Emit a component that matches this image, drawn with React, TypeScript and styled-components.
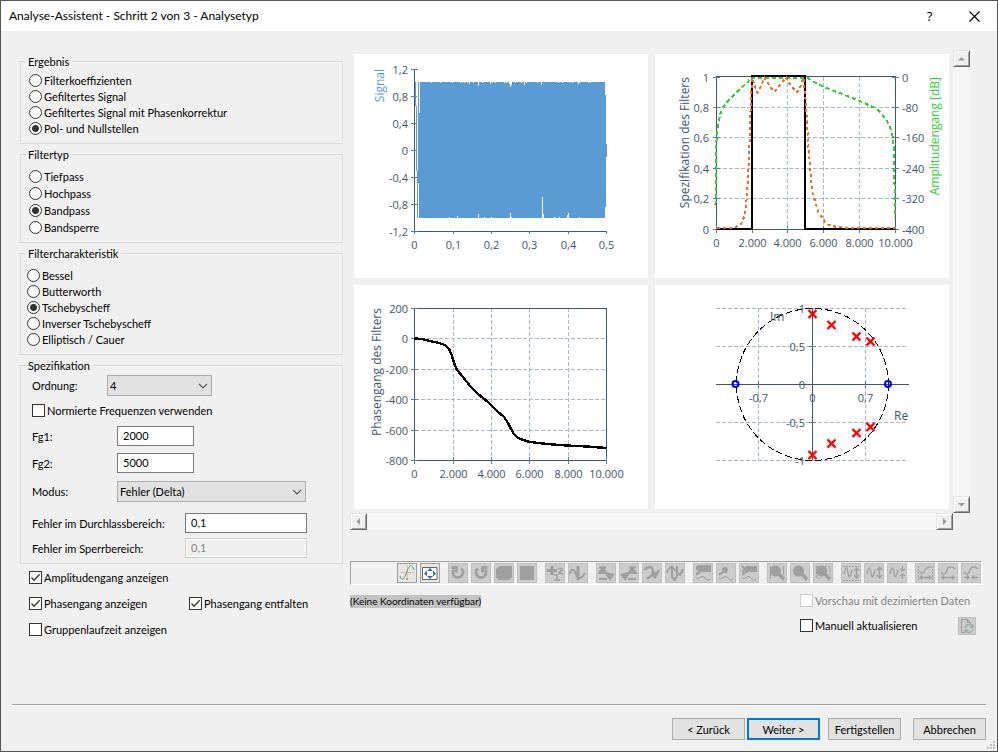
import React from "react";
import styled, { createGlobalStyle, css } from "styled-components";

const GlobalStyle = createGlobalStyle`
  *, *::before, *::after { box-sizing: border-box; }
  body {
    margin: 0;
    background: #f0f0f0;
    color: #000;
    font: 11px/13px Lato, "Liberation Sans", sans-serif;
  }
  button, input, select { font: inherit; color: inherit; margin: 0; }
`;

/* ---------- window frame ---------- */

const Window = styled.div`
  position: relative;
  display: flex;
  flex-direction: column;
  min-height: 100vh;
  border: 1px solid #555;
  background: #f0f0f0;
`;

const TitleBar = styled.header`
  display: flex;
  align-items: center;
  height: 30px;
  padding-left: 8px;
  background: #fff;
`;

const Title = styled.h1`
  flex: 1;
  margin: 0;
  font: 12px/16px Lato, "Noto Sans", sans-serif;
`;

const CaptionButton = styled.button`
  display: grid;
  place-items: center;
  width: 45px;
  height: 28px;
  padding: 0;
  border: 0;
  background: none;
  font: 500 13px/16px "Open Sans", "Noto Sans", sans-serif;
`;

const Body = styled.main`
  display: grid;
  grid-template-columns: 323px 1fr;
  gap: 7px;
  padding: 0 15px 0 19px;
`;

/* ---------- settings ---------- */

const Settings = styled.form`
  display: flex;
  flex-direction: column;
  gap: 4px;
  padding-top: 24px;
`;

const Group = styled.fieldset`
  min-width: 0;
  margin: 0;
  padding: 0;
  border: 1px solid #dcdcdc;
`;

const Legend = styled.legend`
  margin-left: 6px;
  padding: 0 3px 0 1px;
`;

const Options = styled.div<{ $top: number; $gap: number; $left: number }>`
  display: flex;
  flex-direction: column;
  align-items: flex-start;
  gap: ${(p) => p.$gap}px;
  padding: ${(p) => p.$top}px 8px 8px ${(p) => p.$left}px;
`;

const Choice = styled.label<{ $disabled?: boolean }>`
  display: flex;
  align-items: center;
  gap: 2px;
  height: 13px;
  white-space: nowrap;
  color: ${(p) => (p.$disabled ? "#838383" : "#000")};
`;

const Radio = styled.input.attrs({ type: "radio" })`
  appearance: none;
  flex: none;
  width: 13px;
  height: 13px;
  border: 1px solid #333;
  border-radius: 50%;
  background: #fff;
  &:checked {
    background: radial-gradient(circle, #333 0 3px, #fff 4px);
  }
`;

const CheckInput = styled.input.attrs({ type: "checkbox" })`
  appearance: none;
  grid-area: 1 / 1;
  width: 13px;
  height: 13px;
  border: 1px solid #333;
  background: #fff;
  &:disabled { border-color: #ccc; }
  & + svg { visibility: hidden; }
  &:checked + svg { visibility: visible; }
`;

const CheckBox = styled.span`
  display: grid;
  flex: none;
  svg { grid-area: 1 / 1; pointer-events: none; }
`;

const Fields = styled.div`
  display: flex;
  flex-direction: column;
  padding: 3px 11px 5px;
`;

const Field = styled.div<{ $label: number; $gap?: number }>`
  display: grid;
  grid-template-columns: ${(p) => p.$label}px auto;
  justify-content: start;
  align-items: center;
  margin-bottom: ${(p) => p.$gap ?? 0}px;
`;

const Spaced = styled.div`
  display: flex;
  margin-bottom: 9px;
`;

const TextBox = styled.input.attrs({ type: "text" })<{ $width: number }>`
  width: ${(p) => p.$width}px;
  height: 20px;
  padding: 0 5px 1px;
  border: 1px solid #7a7a7a;
  background: #fff;
  &:disabled {
    border-color: #ccc;
    background: #f0f0f0;
    box-shadow: inset 0 0 0 1px #fff;
    color: #838383;
  }
`;

const SelectFrame = styled.span<{ $width: number }>`
  position: relative;
  width: ${(p) => p.$width}px;
  svg {
    position: absolute;
    right: 4px;
    top: 8px;
    pointer-events: none;
  }
`;

const Select = styled.select`
  appearance: none;
  display: block;
  width: 100%;
  height: 21px;
  padding: 0 2px;
  border: 1px solid #adadad;
  border-radius: 0;
  background: #e1e1e1;
`;

const Toggles = styled.div`
  display: grid;
  grid-template-columns: 160px auto;
  justify-content: start;
  row-gap: 13px;
  padding: 3px 9px 0;
`;

/* ---------- preview ---------- */

const Preview = styled.section`
  min-width: 0;
  padding-top: 19px;
`;

const Scroller = styled.div`
  display: grid;
  grid-template-columns: 1fr 17px;
  grid-template-rows: auto 17px;
  margin-right: 12px;
`;

const Charts = styled.div`
  display: grid;
  grid-template-columns: 1fr 1fr;
  gap: 7px;
  padding: 4px;
`;

const ChartSvg = styled.svg`
  display: block;
  width: 100%;
  background: #fff;
  fill: #44546a;
  font: 11px "Open Sans", "Noto Sans", sans-serif;
`;

const AxisTitle = styled.text`
  font-size: 12px;
`;

const ScrollTrack = styled.div<{ $vertical?: boolean }>`
  display: flex;
  flex-direction: ${(p) => (p.$vertical ? "column" : "row")};
  justify-content: space-between;
  background: repeating-conic-gradient(#fff 0 25%, #f0f0f0 0 50%) 0 0 / 2px 2px;
`;

const ScrollButton = styled.button`
  display: grid;
  place-items: center;
  width: 17px;
  height: 17px;
  padding: 0;
  border: 1px solid;
  border-color: #e3e3e3 #696969 #696969 #e3e3e3;
  background: #f0f0f0;
  box-shadow: inset 1px 1px #fff, inset -1px -1px #a0a0a0;
`;

const ToolBar = styled.div`
  display: flex;
  gap: 8px;
  height: 24px;
  margin-top: 31px;
  padding: 1px 0 0 46px;
  border: 1px solid;
  border-color: #a0a0a0 #fff #fff #a0a0a0;
`;

const ToolGroup = styled.div`
  display: flex;
  gap: 3px;
`;

const toolColors = css`
  border: 1px solid #bfbfbf;
  background: #ccc;
`;

const Tool = styled.button<{ $active?: boolean }>`
  display: block;
  width: 20px;
  height: 20px;
  padding: 0;
  ${(p) => (p.$active ? "border: 1px solid #a0a0a0; background: #e6e6e6;" : toolColors)}
  svg { display: block; }
`;

const Status = styled.div`
  display: grid;
  grid-template-columns: 1fr 182px;
  padding-top: 9px;
`;

const Coordinates = styled.output`
  justify-self: start;
  align-self: start;
  margin-top: 1px;
  background: #c3c3c3;
  font: 10px/13px Lato, "Noto Sans", sans-serif;
`;

const UpdateOptions = styled.div`
  display: grid;
  gap: 10px;
`;

const UpdateRow = styled.div`
  display: flex;
  align-items: flex-start;
  justify-content: space-between;
  padding-right: 6px;
`;

const Manual = styled.div`
  padding-top: 2px;
`;

const RefreshButton = styled.button`
  width: 18px;
  height: 18px;
  padding: 0;
  ${toolColors}
  svg { display: block; }
`;

/* ---------- footer ---------- */

const Footer = styled.footer`
  display: flex;
  justify-content: flex-end;
  margin: auto 11px 0;
  padding: 13px 0 11px;
  border-top: 1px solid #a0a0a0;
  box-shadow: inset 0 1px #fff;
`;

const ActionButton = styled.button<{ $primary?: boolean; $gap?: number }>`
  width: 73px;
  height: 22px;
  margin-left: ${(p) => p.$gap ?? 0}px;
  padding: 0;
  border: ${(p) => (p.$primary ? "2px solid #0078d7" : "1px solid #adadad")};
  background: #e1e1e1;
`;

const Grip = styled.svg`
  position: absolute;
  right: 2px;
  bottom: 2px;
`;

/* ---------- small controls ---------- */

function Check({ label, ...rest }: { label: string; defaultChecked?: boolean; disabled?: boolean }) {
  return (
    <Choice $disabled={rest.disabled}>
      <CheckBox>
        <CheckInput {...rest} />
        <svg width="13" height="13" viewBox="0 0 13 13" fill="none" stroke="#333" strokeWidth="1.3">
          <path d="M2.5 6.5 5 9.2 10.7 3.3" />
        </svg>
      </CheckBox>
      {label}
    </Choice>
  );
}

function RadioGroup(p: {
  name: string; title: string; items: string[]; selected: number; top: number; gap: number; left: number;
}) {
  return (
    <Group>
      <Legend>{p.title}</Legend>
      <Options $top={p.top} $gap={p.gap} $left={p.left}>
        {p.items.map((item, i) => (
          <Choice key={item}>
            <Radio name={p.name} defaultChecked={i === p.selected} />
            {item}
          </Choice>
        ))}
      </Options>
    </Group>
  );
}

function DropDown({ id, width, options }: { id: string; width: number; options: string[] }) {
  return (
    <SelectFrame $width={width}>
      <Select id={id}>
        {options.map((o) => <option key={o}>{o}</option>)}
      </Select>
      <svg width="10" height="6" viewBox="0 0 10 6" fill="none" stroke="#555" strokeWidth="1.2">
        <path d="M1 .8 5 4.8 9 .8" />
      </svg>
    </SelectFrame>
  );
}

function Arrow({ d }: { d: string }) {
  return <svg width="9" height="9" viewBox="0 0 9 9" fill="#9a9a9a"><path d={d} /></svg>;
}

/* ---------- charts ---------- */

type Tick = [number, string];
const AXIS = "#44546a";
const TICK = "#5a7ca5";
const GRID = "#adb5c8";

const yLabels = (ticks: Tick[], x: number, anchor: "start" | "end" = "end") =>
  ticks.map(([y, t]) => <text key={t} x={x} y={y + 4} textAnchor={anchor}>{t}</text>);
const xLabels = (ticks: Tick[], y: number) =>
  ticks.map(([x, t]) => <text key={t} x={x} y={y} textAnchor="middle">{t}</text>);
const hLines = (ys: number[], x1: number, x2: number) => ys.map((y) => `M${x1} ${y}H${x2}`).join("");
const vLines = (xs: number[], y1: number, y2: number) => xs.map((x) => `M${x} ${y1}V${y2}`).join("");
const poly = (pts: number[][]) => "M" + pts.map((p) => p.join(" ")).join("L");

const freqTicks: Tick[] = [[60.5, "0"], [99.5, "2.000"], [137.5, "4.000"], [175.5, "6.000"], [214.5, "8.000"], [252.5, "10.000"]];

function SignalChart() {
  const ys: Tick[] = [[15.5, "1,2"], [42.5, "0,8"], [69.5, "0,4"], [96.5, "0"], [123.5, "-0,4"], [150.5, "-0,8"], [177.5, "-1,2"]];
  const xs: Tick[] = [[60.5, "0"], [99.5, "0,1"], [137.5, "0,2"], [175.5, "0,3"], [214.5, "0,4"], [252.5, "0,5"]];
  const topGaps = [[77, 1], [86, 1], [98, 1], [106, 1], [108, 1], [110, 1], [113, 1], [115, 2], [119, 1], [124, 4], [128, 1], [136, 2], [138, 1], [141, 1], [150, 1], [152, 1], [155, 2], [156, 5], [157, 3], [161, 1], [167, 1], [170, 3], [172, 1], [183, 1], [187, 3], [204, 1], [208, 1], [215, 1], [218, 1], [224, 2], [225, 1], [234, 1], [236, 1]];
  const bottomGaps = [[95, 1], [103, 2], [124, 4], [130, 1], [137, 1], [156, 5], [157, 1], [188, 21], [189, 4], [200, 1], [205, 1], [213, 3], [214, 5], [225, 1]];
  return (
    <ChartSvg viewBox="0 0 294 224" role="img" aria-label="Signal">
      <g shapeRendering="crispEdges">
        <path d="M60.5 15.5V177.5H252.5" fill="none" stroke={AXIS} />
        <path d={hLines(ys.map((t) => t[0]), 57, 64) + vLines(xs.map((t) => t[0]), 177, 180)} stroke={TICK} />
        <path fill="#5b9bd5" d="M61 28h1v24h1v65h1v-89h187v13h1v49h1v13h-1v50h-1v11H63v-47h-1v-65h-1z" />
        <path fill="#fff" d="M63 28h1v89h-1zM64 129h1v35h-1zM65 28h1v31h-1z" />
        <path fill="#fff" d={topGaps.map(([x, h]) => `M${x} 28h1v${h}h-1z`).join("")} />
        <path fill="#fff" d={bottomGaps.map(([x, h]) => `M${x} 164h1v${-h}h-1z`).join("")} />
      </g>
      {yLabels(ys, 54)}
      {xLabels(xs, 195)}
      <AxisTitle transform="translate(30 15) rotate(-90)" textAnchor="end" fill="#5b9bd5">Signal</AxisTitle>
    </ChartSvg>
  );
}

const amplitude = [[60.5, 151], [61, 91], [62.7, 74], [65, 61], [68, 53], [75, 45], [85, 35], [92, 29], [96, 23.5], [152, 23.5], [158, 27.5], [168, 32.5], [187, 40], [205, 47], [222, 55], [231, 65], [237, 78], [239, 94], [240, 164]];
const response = [[62, 174.5], [80, 173.3], [86, 170], [90, 161], [92, 141], [94, 104], [95.7, 51], [97.3, 24], [99, 30], [102.3, 38.7], [105, 34], [109.3, 23.5], [114, 31], [119.3, 37.7], [125, 31], [131, 23.5], [136, 32], [142, 38.3], [146, 31], [148.3, 23.5], [150.3, 41], [153.3, 91], [157.3, 138], [163.3, 158], [171.7, 170], [182, 173.3], [205, 174.3], [240.5, 174.5]];

function FilterChart() {
  const ys: Tick[] = [[23.5, "1"], [53.5, "0,8"], [83.5, "0,6"], [114.5, "0,4"], [144.5, "0,2"], [175.5, "0"]];
  const y2: Tick[] = [[23.5, "0"], [53.5, "-80"], [83.5, "-160"], [114.5, "-240"], [144.5, "-320"], [175.5, "-400"]];
  const xs: Tick[] = [[61.5, "0"], [97.5, "2.000"], [132.5, "4.000"], [168.5, "6.000"], [204.5, "8.000"], [240.5, "10.000"]];
  const yv = ys.map((t) => t[0]);
  const xv = xs.map((t) => t[0]);
  return (
    <ChartSvg viewBox="0 0 294 224" role="img" aria-label="Spezifikation des Filters">
      <g fill="none" shapeRendering="crispEdges">
        <path d={hLines(yv.slice(1, 5), 62, 240) + vLines(xv.slice(1, 5), 23, 175)} stroke={GRID} strokeDasharray="4 2" />
        <path d="M61.5 22.5H240.5V175.5H61.5Z" stroke={AXIS} />
        <path d={hLines(yv, 58, 65) + hLines(yv, 237, 244) + vLines(xv, 172, 179)} stroke={TICK} />
        <path d="M62 175H97V22H150V175H240" stroke="#000" strokeWidth="2" />
        <path d={poly(amplitude)} stroke="#32cd32" strokeWidth="2" strokeDasharray="4 3" />
        <path d={poly(response)} stroke="#ff6820" strokeWidth="2" strokeDasharray="3 3" />
      </g>
      {yLabels(ys, 54)}
      {yLabels(y2, 247, "start")}
      {xLabels(xs, 193)}
      <AxisTitle transform="translate(34 23) rotate(-90)" textAnchor="end">Spezifikation des Filters</AxisTitle>
      <AxisTitle transform="translate(284 23) rotate(-90)" textAnchor="end" fill="#32cd32">Amplitudengang [dB]</AxisTitle>
    </ChartSvg>
  );
}

const phase = [[60.5, 53.5], [68, 54], [76, 56], [84, 57.7], [91, 60], [95, 64], [97.7, 70], [100, 78], [103, 85], [109, 92], [116, 101], [124, 109], [134, 117], [143, 126], [150, 132], [154, 138], [157, 144], [160, 149], [164, 153], [169, 155], [176, 157], [193, 159], [213, 160.5], [233, 161.5], [252.5, 163]];

function PhaseChart() {
  const ys: Tick[] = [[23.5, "200"], [53.5, "0"], [84.5, "-200"], [114.5, "-400"], [145.5, "-600"], [175.5, "-800"]];
  const yv = ys.map((t) => t[0]);
  const xv = freqTicks.map((t) => t[0]);
  return (
    <ChartSvg viewBox="0 0 294 224" role="img" aria-label="Phasengang des Filters">
      <g fill="none" shapeRendering="crispEdges">
        <path d={hLines(yv.slice(1, 5), 61, 252) + vLines(xv.slice(1, 5), 23, 175)} stroke={GRID} strokeDasharray="4 2" />
        <path d="M60.5 23.5H252.5V175.5H60.5Z" stroke={AXIS} />
        <path d={hLines(yv, 57, 64) + vLines(xv, 172, 179)} stroke={TICK} />
        <path d={poly(phase)} stroke="#000" strokeWidth="2.4" />
      </g>
      {yLabels(ys, 54)}
      {xLabels(freqTicks, 193)}
      <AxisTitle transform="translate(27 23) rotate(-90)" textAnchor="end">Phasengang des Filters</AxisTitle>
    </ChartSvg>
  );
}

const poles = [[157.5, 29], [176.5, 40], [201.5, 51.5], [215.5, 56.5], [157.5, 170], [176.5, 158.5], [201.5, 148], [215.5, 142]];
const zeros = [[80.5, 99], [233, 99]];

function PoleZeroChart() {
  const ys: Tick[] = [[23.5, "1"], [61.5, "0,5"], [99.5, "0"], [137.5, "-0,5"], [175.5, "-1"]];
  return (
    <ChartSvg viewBox="0 0 294 224" role="img" aria-label="Pol- und Nullstellen">
      <g fill="none" shapeRendering="crispEdges">
        <path d={hLines([23.5, 61.5, 137.5, 175.5], 61, 251) + vLines([103.5, 210.5], 23, 175)} stroke={GRID} strokeDasharray="4 2" />
        <path d="M61 99.5H254M157.5 23V175" stroke={AXIS} />
        <path d={hLines([61.5, 137.5], 154, 161) + vLines([103.5, 210.5], 96, 103)} stroke={TICK} />
        <circle cx="157.5" cy="99.5" r="76" stroke="#000" strokeDasharray="7 3" />
      </g>
      {yLabels(ys, 150)}
      {xLabels([[103.5, "-0,7"], [157.5, "0"], [210.5, "0,7"]], 117)}
      <AxisTitle x="115" y="36">Im</AxisTitle>
      <AxisTitle x="239" y="135">Re</AxisTitle>
      <path d={poles.map(([x, y]) => `M${x - 4} ${y - 4}l8 8m0-8l-8 8`).join("")} stroke="#f00" strokeWidth="2.4" />
      {zeros.map(([x, y]) => <circle key={x} cx={x} cy={y} r="3" fill="none" stroke="#00f" strokeWidth="2" />)}
    </ChartSvg>
  );
}

/* ---------- tool icons, drawn on the 20px face of a tool button ---------- */

const G = "#9f9f9f";
const lens = <><circle cx="8.500" cy="8" r="5.500" fill={G} /><path d="M11 10l6 6.500" stroke={G} strokeWidth="3.500" /></>;
const tail = <path d="M3 15c3 2 5-3 8-1s2 5 6 2" fill="none" stroke={G} />;

const icons: { title: string; active?: boolean; art: React.ReactNode }[][] = [
  [
    { title: "Kurve", active: true, art: <><path d="M3 9.500H17M10.500 2V14" stroke="#f4b49c" /><path d="M3 13C4 18 7 17 9 11S14-2 17 7" stroke="#5d9c85" fill="none" /><path d="M9 15h2v2H9z" fill="#f08868" /></> },
    { title: "Alles anzeigen", active: true, art: <><path d="M2.500 4.500h14.500v12H2.500z" fill="#fff" stroke="#666" /><path d="M10 5l3 3H7zM10 16l3-3H7zM4 10.500l3-3v6zM16 10.500l-3-3v6z" fill="#2e75b6" /></> },
  ],
  [
    { title: "Rechts drehen", art: <path d="M13 5.500A5 5 0 1 1 6 6.500M3.500 4.500h5v5" fill="none" stroke={G} strokeWidth="2.800" /> },
    { title: "Links drehen", art: <path d="M7 5.500A5 5 0 1 0 14 6.500M16.500 4.500h-5v5" fill="none" stroke={G} strokeWidth="2.800" /> },
    { title: "Volumen", art: <path d="M2 6 6 3H18V14L15 17H5L2 15z" fill={G} /> },
    { title: "Rechteck", art: <path d="M3 3H17V17H3z" fill={G} /> },
  ],
  [
    { title: "Cursor 1 und 2", art: <><path d="M2 7.500h10M7 3v9" stroke={G} strokeWidth="3" /><path d="M13 5.500h4v2l-3 2v1h4M9 12h3v5M9 17h6" fill="none" stroke={G} strokeWidth="1.500" /></> },
    { title: "Cursor", art: <><path d="M2 11c1-6 5-5 6 0s5 6 9-1" fill="none" stroke={G} strokeWidth="2" /><path d="M10 3v14" stroke={G} strokeWidth="3" /></> },
  ],
  [
    { title: "Maximum", art: <path d="M3 4.500h7M7 4 3 10h7zM8 8l6 8 4-5M14 16v-5M3 16h8" fill={G} stroke={G} strokeWidth="1.800" /> },
    { title: "Minimum", art: <path d="M17 4.500h-7M13 4l4 6h-7zM12 8l-6 8-4-5M6 16v-5M17 16H9" fill={G} stroke={G} strokeWidth="1.800" /> },
    { title: "Vorheriges Extremum", art: <path d="M3 7c2-4 7-4 8 0s-2 6-6 9M10 11l3 3 4-7M13 14v-5" fill="none" stroke={G} strokeWidth="2.500" /> },
    { title: "Nächstes Extremum", art: <path d="M2 10c1-4 2-5 5-6v10l3 3 2-4M7 4l8 8 3-6M12 13V3" fill="none" stroke={G} strokeWidth="2" /> },
  ],
  [
    { title: "Bereich", art: <><circle cx="6" cy="5" r="3" fill={G} /><path d="M8 2h10v7H8zM10 8l-7 5V10l5-3z" fill={G} />{tail}</> },
    { title: "Punkt", art: <><circle cx="9" cy="7" r="3" fill={G} /><path d="M9 9l-6 4v-3l5-2z" fill={G} />{tail}</> },
    { title: "Bereich löschen", art: <><path d="M3 3l6 6M9 3L3 9" stroke={G} strokeWidth="2" /><path d="M8 3h10v6H8zM10 8l-7 5V10l5-3z" fill={G} />{tail}</> },
  ],
  [
    { title: "Zoom Breite", art: <>{lens}<path d="M3.500 3v13M16.500 3v9" stroke={G} /></> },
    { title: "Zoom", art: lens },
    { title: "Zoom Auswahl", art: <>{lens}<path d="M3 3.500H17V12M3.500 3V15H9" stroke={G} fill="none" strokeDasharray="2 1" /></> },
  ],
  [
    { title: "Y-Achse anpassen", art: <><path d="M2 3.500H18M2 17.500H18" stroke={G} strokeDasharray="2 1" /><path d="M3 11C5 2 6 4 7 10s2 5 4-3M15.500 5v10M13 8l2.500-3L18 8M13 12l2.500 3L18 12" fill="none" stroke={G} strokeWidth="1.300" /></> },
    { title: "Y-Achse strecken", art: <path d="M3 11C5 2 6 4 7 10s2 5 4-3M15.500 4v11M13 7l2.500-3L18 7M13 12l2.500 3L18 12" fill="none" stroke={G} strokeWidth="1.300" /> },
    { title: "Y-Achse stauchen", art: <path d="M3 11C5 2 6 4 7 10s2 5 4-3M15.500 3v5M15.500 11v5M13 6l2.500 2L18 6M13 13l2.500-2L18 13" fill="none" stroke={G} strokeWidth="1.300" /> },
  ],
  [
    { title: "X-Achse anpassen", art: <><path d="M3.500 3V17M17.500 3V17" stroke={G} strokeDasharray="2 1" /><path d="M5 8c2 4 4 2 5-1s4-3 6-3M5 14.500H16M7 12.500 5 14.500 7 16.500M14 12.500l2 2-2 2" fill="none" stroke={G} strokeWidth="1.300" /></> },
    { title: "X-Achse strecken", art: <path d="M3 9c2 4 5 2 6-2s5-4 8-1M4 14.500H16M6 12.500 4 14.500 6 16.500M14 12.500l2 2-2 2" fill="none" stroke={G} strokeWidth="1.300" /> },
    { title: "X-Achse stauchen", art: <path d="M3 9c2 4 5 2 6-2s5-4 8-1M3 14.500H8M11 14.500H17M6 12.500l2 2-2 2M13 12.500l-2 2 2 2" fill="none" stroke={G} strokeWidth="1.300" /> },
  ],
];

export default function App() {
  return (
    <Window>
      <GlobalStyle />
      <TitleBar>
        <Title>Analyse-Assistent - Schritt 2 von 3 - Analysetyp</Title>
        <CaptionButton aria-label="Hilfe">?</CaptionButton>
        <CaptionButton aria-label="Schließen">
          <svg width="11" height="11" viewBox="0 0 11 11" stroke="#000" strokeWidth="1.100"><path d="M.5.500l10 10M10.500.500l-10 10" /></svg>
        </CaptionButton>
      </TitleBar>
      <Body>
        <Settings>
          <RadioGroup name="ergebnis" title="Ergebnis" selected={3} top={6} gap={3} left={8}
            items={["Filterkoeffizienten", "Gefiltertes Signal", "Gefiltertes Signal mit Phasenkorrektur", "Pol- und Nullstellen"]} />
          <RadioGroup name="filtertyp" title="Filtertyp" selected={2} top={9} gap={4} left={8}
            items={["Tiefpass", "Hochpass", "Bandpass", "Bandsperre"]} />
          <RadioGroup name="charakteristik" title="Filtercharakteristik" selected={2} top={9} gap={3} left={6}
            items={["Bessel", "Butterworth", "Tschebyscheff", "Inverser Tschebyscheff", "Elliptisch / Cauer"]} />
          <Group>
            <Legend>Spezifikation</Legend>
            <Fields>
              <Field $label={75} $gap={8}>
                <label htmlFor="ordnung">Ordnung:</label>
                <DropDown id="ordnung" width={105} options={["4"]} />
              </Field>
              <Spaced><Check label="Normierte Frequenzen verwenden" /></Spaced>
              <Field $label={85} $gap={7}>
                <label htmlFor="fg1">Fg1:</label>
                <TextBox id="fg1" $width={77} defaultValue="2000" />
              </Field>
              <Field $label={85} $gap={8}>
                <label htmlFor="fg2">Fg2:</label>
                <TextBox id="fg2" $width={77} defaultValue="5000" />
              </Field>
              <Field $label={85} $gap={11}>
                <label htmlFor="modus">Modus:</label>
                <DropDown id="modus" width={189} options={["Fehler (Delta)"]} />
              </Field>
              <Field $label={153} $gap={5}>
                <label htmlFor="durchlass">Fehler im Durchlassbereich:</label>
                <TextBox id="durchlass" $width={122} defaultValue="0,1" />
              </Field>
              <Field $label={153}>
                <label htmlFor="sperr">Fehler im Sperrbereich:</label>
                <TextBox id="sperr" $width={122} defaultValue="0,1" disabled />
              </Field>
            </Fields>
          </Group>
          <Toggles>
            <Check label="Amplitudengang anzeigen" defaultChecked />
            <span />
            <Check label="Phasengang anzeigen" defaultChecked />
            <Check label="Phasengang entfalten" defaultChecked />
            <Check label="Gruppenlaufzeit anzeigen" />
          </Toggles>
        </Settings>
        <Preview>
          <Scroller>
            <Charts>
              <SignalChart />
              <FilterChart />
              <PhaseChart />
              <PoleZeroChart />
            </Charts>
            <ScrollTrack $vertical>
              <ScrollButton aria-label="Nach oben"><Arrow d="M1 6.500 4.500 3 8 6.500z" /></ScrollButton>
              <ScrollButton aria-label="Nach unten"><Arrow d="M1 3 4.500 6.500 8 3z" /></ScrollButton>
            </ScrollTrack>
            <ScrollTrack>
              <ScrollButton aria-label="Nach links"><Arrow d="M6 1 2.500 4.500 6 8z" /></ScrollButton>
              <ScrollButton aria-label="Nach rechts"><Arrow d="M3 1 6.500 4.500 3 8z" /></ScrollButton>
            </ScrollTrack>
          </Scroller>
          <ToolBar role="toolbar">
            {icons.map((group, i) => (
              <ToolGroup key={i}>
                {group.map(({ title, active, art }) => (
                  <Tool key={title} aria-label={title} $active={active} disabled={!active}>
                    <svg width="18" height="18" viewBox="1 1 18 18">{art}</svg>
                  </Tool>
                ))}
              </ToolGroup>
            ))}
          </ToolBar>
          <Status>
            <Coordinates>(Keine Koordinaten verfügbar)</Coordinates>
            <UpdateOptions>
              <UpdateRow><Check label="Vorschau mit dezimierten Daten" disabled /></UpdateRow>
              <UpdateRow>
                <Manual><Check label="Manuell aktualisieren" /></Manual>
                <RefreshButton aria-label="Aktualisieren" disabled>
                  <svg width="16" height="16" viewBox="1 1 16 16" fill="none">
                    <path d="M7 15.500H3.500V2.500H9.500L12.500 5.500V7M9.500 2.500V5.500H12.500" stroke="#999" fill="none" />
                    <path d="M7 11a4 4 0 0 1 7-2M15 7v3h-3M15 12a4 4 0 0 1-7 2M7 16v-3h3" stroke="#8fb3a6" strokeWidth="1.500" />
                  </svg>
                </RefreshButton>
              </UpdateRow>
            </UpdateOptions>
          </Status>
        </Preview>
      </Body>
      <Footer>
        <ActionButton>&lt; Zurück</ActionButton>
        <ActionButton $primary $gap={2}>Weiter &gt;</ActionButton>
        <ActionButton $gap={8}>Fertigstellen</ActionButton>
        <ActionButton $gap={12}>Abbrechen</ActionButton>
      </Footer>
      <Grip width="8" height="8" viewBox="0 0 8 8" fill="#bfbfbf">
        <path d="M6 0h2v2H6zM3 3h2v2H3zM6 3h2v2H6zM0 6h2v2H0zM3 6h2v2H3zM6 6h2v2H6z" />
      </Grip>
    </Window>
  );
}
